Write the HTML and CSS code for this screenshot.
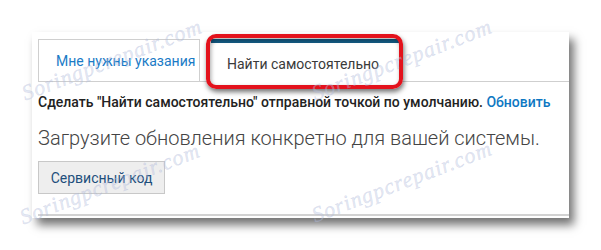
FILE: index.html
```html
<!DOCTYPE html>
<html lang="ru">
<head>
<meta charset="utf-8">
<link rel="stylesheet" href="styles.css">
</head>
<body>
<div class="stage">
  <div class="card">
    <div class="tabs">
      <div class="tab tab-idle">Мне нужны указания</div>
      <div class="tab tab-active">Найти самостоятельно<span class="ring"></span></div>
    </div>
    <p class="hint">Сделать "Найти самостоятельно" отправной точкой по умолчанию. <a class="link">Обновить</a></p>
    <p class="lead">Загрузите обновления конкретно для вашей системы.</p>
    <button class="btn">Сервисный код</button>
    <div class="rule"></div>
  </div>
  <span class="wm wm1">Soringpcrepair.com</span>
  <span class="wm wm2">Soringpcrepair.com</span>
  <span class="wm wm3">Soringpcrepair.com</span>
  <span class="wm wm4">Soringpcrepair.com</span>
</div>
</body>
</html>
```
FILE: styles.css
```css
html, body {
  margin: 0;
  padding: 0;
  background: #fff;
}
.stage {
  position: relative;
  width: 601px;
  height: 250px;
  padding: 32px 0 0 32px;
  box-sizing: border-box;
  overflow: hidden;
  font-family: Roboto, "Liberation Sans", sans-serif;
}
.card {
  width: 537px;
  height: 186px;
  background: #fff;
  box-shadow: 5px 7px 9px rgba(0,0,0,0.55);
  padding: 7px 0 0 6px;
  box-sizing: border-box;
  display: flex;
  flex-direction: column;
}
.tabs {
  display: flex;
  height: 43px;
  border-bottom: 1px solid #cfcfcf;
  box-sizing: border-box;
}
.tab {
  font-size: 14px;
  display: flex;
  align-items: center;
  box-sizing: border-box;
  height: 43px;
}
.tab-idle {
  width: 162px;
  padding-left: 17px;
  color: #1a7bc6;
  border: 1px solid #cfcfcf;
  border-bottom: none;
}
.tab-active {
  position: relative;
  margin-left: 11px;
  width: 188px;
  padding-left: 16px;
  padding-top: 1px;
  color: #3a3a3a;
  background: #fff;
  border-top: 4px solid #135a83;
  margin-bottom: -1px;
  height: 44px;
}
.ring {
  position: absolute;
  left: -5px;
  top: -9px;
  right: -4px;
  bottom: -6px;
  border: 4px solid #e3121c;
  border-radius: 10px;
  box-shadow: 1px 3px 5px rgba(0,0,0,0.55), inset 1px 2px 4px rgba(0,0,0,0.35);
}
.hint {
  margin: 11px 0 0 0;
  font-size: 14px;
  font-weight: 500;
  line-height: 18px;
  color: #222;
}
.link {
  color: #0e77c2;
}
.lead {
  margin: 14px 0 0 0;
  font-size: 20px;
  font-weight: 300;
  line-height: 26px;
  color: #444;
}
.btn {
  align-self: flex-start;
  margin-top: 10px;
  width: 127px;
  height: 33px;
  background: #eeeeee;
  border: 1px solid #c8c8c8;
  border-radius: 0;
  font-family: Roboto, "Liberation Sans", sans-serif;
  font-size: 14px;
  color: #1e4f7c;
  padding: 0;
}
.rule {
  margin-top: 20px;
  height: 2px;
  background: #d2d2d2;
}
.wm {
  position: absolute;
  font-family: "Liberation Serif", serif;
  font-style: italic;
  font-size: 22px;
  letter-spacing: 1px;
  color: rgba(185,195,225,0.4);
  -webkit-text-stroke: 0.4px rgba(160,170,210,0.3);
  transform: translate(-50%, -50%) rotate(-21deg);
  white-space: nowrap;
  pointer-events: none;
}
.wm1 { left: 112px; top: 60px; }
.wm2 { left: 402px; top: 60px; }
.wm3 { left: 110px; top: 184px; }
.wm4 { left: 402px; top: 182px; }
```
